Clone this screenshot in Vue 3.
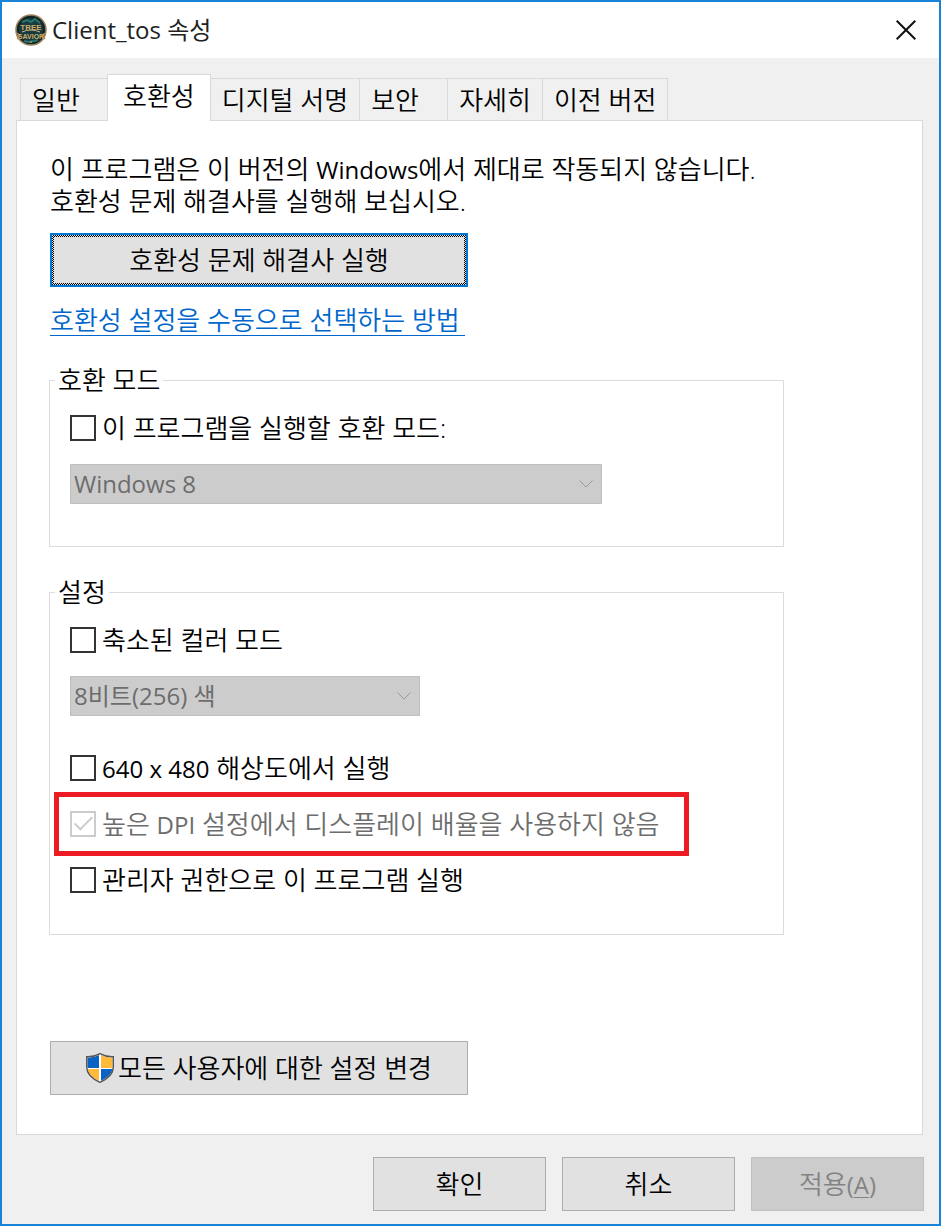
<template>
  <div class="dialog">
    <!-- Title bar -->
    <header class="title-bar">
      <svg class="app-icon" viewBox="0 0 32 32" aria-hidden="true">
        <circle cx="16" cy="16" r="15" fill="#173c3f" stroke="#9b8058" stroke-width="1.5" />
        <circle cx="16" cy="16" r="13" fill="none" stroke="#102527" stroke-width="2" />
        <path d="M7 8l5-2 4 2 4-3 5 4M9 27l5 1 5-1 4-1" fill="none" stroke="#2b746d" stroke-width="2" />
        <path d="M2 19l3 3-3 3M30 19l-3 3 3 3" fill="none" stroke="#b08b55" stroke-width="1.5" />
        <text x="16" y="16" class="logo-top">TREE</text>
        <text x="16" y="25" class="logo-bottom">SAVIOR</text>
        <path d="M7 18q9-4 18 0M15 28h2" fill="none" stroke="#d2b277" />
      </svg>
      <h1 class="title">Client_tos 속성</h1>
      <button type="button" class="close-button" aria-label="닫기">
        <svg viewBox="0 0 20 20" aria-hidden="true">
          <path d="M.7.7l18.600 18.600M19.300.7L.7 19.300" fill="none" stroke="#111" stroke-width="2" />
        </svg>
      </button>
    </header>

    <!-- Tabs -->
    <nav class="tabs" role="tablist">
      <button
        v-for="tab in tabs"
        :key="tab"
        type="button"
        role="tab"
        :aria-selected="tab === activeTab"
        :class="['tab', { 'is-active': tab === activeTab }]"
        @click="activeTab = tab"
      >
        {{ tab }}
      </button>
    </nav>

    <main class="panel" role="tabpanel">
      <div class="intro">
        <p>이 프로그램은 이 버전의 <span class="latin">Windows</span>에서 제대로 작동되지 않습니다.</p>
        <p>호환성 문제 해결사를 실행해 보십시오.</p>
      </div>
      <button type="button" class="btn btn-wide is-default">호환성 문제 해결사 실행</button>
      <a href="#" class="help-link" @click.prevent>호환성 설정을 수동으로 선택하는 방법</a>

      <fieldset class="group">
        <legend>호환 모드</legend>
        <label class="check-row">
          <input v-model="options.compat" type="checkbox" />
          <span>이 프로그램을 실행할 호환 모드:</span>
        </label>
        <div class="dropdown">
          <select aria-label="호환 모드" :disabled="!options.compat">
            <option>Windows 8</option>
          </select>
          <svg class="chevron" viewBox="0 0 14 8" aria-hidden="true">
            <path d="M.5.5L7 7l6.500-6.500" />
          </svg>
        </div>
      </fieldset>

      <fieldset class="group group-settings">
        <legend>설정</legend>
        <label class="check-row">
          <input v-model="options.color" type="checkbox" />
          <span>축소된 컬러 모드</span>
        </label>
        <div class="dropdown is-short">
          <select aria-label="컬러 모드" :disabled="!options.color">
            <option>8비트(256) 색</option>
          </select>
          <svg class="chevron" viewBox="0 0 14 8" aria-hidden="true">
            <path d="M.5.5L7 7l6.500-6.500" />
          </svg>
        </div>
        <div class="check-list">
          <label class="check-row">
            <input v-model="options.lowRes" type="checkbox" />
            <span><span class="latin">640 x 480</span> 해상도에서 실행</span>
          </label>
          <label class="check-row is-disabled is-marked">
            <input type="checkbox" checked disabled />
            <span>높은 <span class="latin">DPI</span> 설정에서 디스플레이 배율을 사용하지 않음</span>
          </label>
          <label class="check-row">
            <input v-model="options.admin" type="checkbox" />
            <span>관리자 권한으로 이 프로그램 실행</span>
          </label>
        </div>
      </fieldset>

      <button type="button" class="btn btn-wide all-users">
        <svg class="shield" viewBox="0 0 28 30" aria-hidden="true">
          <path d="M14 .7C10 3 5 4 .7 3.700V14c0 7 6 12 13.300 15.300C21.300 26 27.300 21 27.300 14V3.700C23 4 18 3 14 .7z" fill="#fff" />
          <path d="M13 2C9 4 5 4.700 1.500 4.700V15H13z" fill="#0863c5" />
          <path d="M15 2c4 2 8 2.700 11.500 2.700V15H15z" fill="#ffba39" />
          <path d="M1.500 16H13v12C7 25 2.500 21 1.500 16z" fill="#ffba39" />
          <path d="M26.500 16H15v12c6-3 10.500-7 11.500-12z" fill="#0863c5" />
          <path d="M14 .7C10 3 5 4 .7 3.700V14c0 7 6 12 13.300 15.300C21.300 26 27.300 21 27.300 14V3.700C23 4 18 3 14 .7z" fill="none" stroke="#555" stroke-width="1.400" />
        </svg>
        <span>모든 사용자에 대한 설정 변경</span>
      </button>
    </main>

    <!-- Action Buttons -->
    <footer class="actions">
      <button type="button" class="btn">확인</button>
      <button type="button" class="btn">취소</button>
      <button type="button" class="btn" disabled>적용<span class="latin">(<u>A</u>)</span></button>
    </footer>
  </div>
</template>

<script setup>
import { reactive, ref } from 'vue';

const tabs = ['일반', '호환성', '디지털 서명', '보안', '자세히', '이전 버전'];
const activeTab = ref('호환성');

const options = reactive({
  compat: false,
  color: false,
  lowRes: false,
  admin: false,
});
</script>

<style>
body {
  margin: 0;
}
</style>

<style scoped>
.dialog {
  box-sizing: border-box;
  display: flex;
  flex-direction: column;
  min-height: 100vh;
  border: 2px solid #1883d7;
  background: #f0f0f0;
  color: #000;
  font-family: "Open Sans", "Noto Sans CJK KR", sans-serif;
  font-size: 26px;
  font-weight: 350;
  line-height: 32px;
}

button,
select {
  font: inherit;
  color: inherit;
}

.latin {
  font-size: 24px;
  font-weight: 400;
  line-height: 24px;
}

/* Title bar */
.title-bar {
  display: flex;
  align-items: center;
  height: 56px;
  padding: 0 13px;
  background: #fff;
}

.app-icon {
  width: 32px;
  height: 32px;
  margin-right: 5px;
}

.logo-top,
.logo-bottom {
  fill: #cfab69;
  font-family: "Liberation Sans", sans-serif;
  font-weight: 700;
  text-anchor: middle;
}

.logo-top {
  font-size: 8px;
}

.logo-bottom {
  font-size: 7px;
}

.title {
  flex: 1;
  margin: 0;
  font-size: 24px;
  font-weight: 400;
  color: #222;
}

.close-button {
  display: flex;
  padding: 10px;
  border: none;
  background: transparent;
}

.close-button svg {
  width: 20px;
  height: 20px;
}

/* Tabs */
.tabs {
  display: flex;
  align-items: flex-end;
  margin: 16px 18px 0;
}

.tab {
  min-width: 88px;
  height: 42px;
  padding: 0 11px;
  border: 1px solid #d9d9d9;
  border-width: 1px 1px 0 0;
  background: #f0f0f0;
  text-align: left;
  white-space: nowrap;
}

.tab:first-child {
  border-left-width: 1px;
}

.tab.is-active {
  position: relative;
  height: 47px;
  margin: 0 0 -1px -1px;
  padding: 0 15px 4px;
  border-left-width: 1px;
  background: #fff;
}

/* Panel */
.panel {
  display: flex;
  flex: 1;
  flex-direction: column;
  align-items: flex-start;
  margin: 0 16px 0 14px;
  padding: 32px 33px 39px;
  border: 1px solid #d9d9d9;
  background: #fff;
}

.intro {
  margin-bottom: 16px;
}

.intro p {
  margin: 0;
}

.btn {
  box-sizing: border-box;
  height: 54px;
  padding: 0;
  border: 1px solid #adadad;
  background: #e1e1e1;
}

.btn:disabled {
  border-color: #bfbfbf;
  background: #ccc;
  color: #838383;
}

.btn-wide {
  width: 418px;
  max-width: 100%;
}

.btn.is-default {
  padding: 2px;
  border: 2px solid #0078d7;
  background:
    linear-gradient(#e1e1e1, #e1e1e1) content-box,
    repeating-conic-gradient(#000 0 25%, #e1e1e1 0 50%) 0 0 / 2px 2px padding-box;
}

.help-link {
  box-sizing: border-box;
  height: 32px;
  margin: 17px 0 28px;
  padding-right: 5px;
  border-bottom: 1px solid #0066cc;
  color: #0066cc;
  text-decoration: none;
}

/* Groups */
.group {
  box-sizing: border-box;
  width: 735px;
  max-width: 100%;
  min-width: 0;
  margin: 0 0 29px -1px;
  padding: 16px 20px 42px;
  border: 1px solid #dcdcdc;
}

.group-settings {
  padding-bottom: 38px;
}

.group legend {
  margin-left: -15px;
  padding: 0 3px;
}

.check-row {
  display: flex;
  align-items: center;
  gap: 6px;
  width: fit-content;
}

.check-row input {
  box-sizing: border-box;
  flex: none;
  appearance: none;
  position: relative;
  width: 26px;
  height: 26px;
  margin: 0;
  border: 2px solid #333;
  background: #fff;
}

.check-row input:disabled {
  border-color: #ccc;
}

.check-row input:checked::after {
  content: "";
  box-sizing: border-box;
  position: absolute;
  top: -1px;
  left: 7px;
  width: 9px;
  height: 18px;
  border: solid #333;
  border-width: 0 2px 2px 0;
  transform: rotate(45deg);
}

.check-row input:disabled::after {
  border-color: #ccc;
}

.check-row.is-disabled {
  color: #6d6d6d;
}

.check-row.is-marked {
  margin: -16px 0 -16px -16px;
  padding: 11px 24px 11px 11px;
  border: 5px solid #ed1c24;
}

.check-list {
  display: flex;
  flex-direction: column;
  gap: 24px;
  margin-top: 36px;
}

.dropdown {
  position: relative;
  width: 532px;
  max-width: 100%;
  margin-top: 20px;
}

.dropdown.is-short {
  width: 350px;
}

.dropdown select {
  box-sizing: border-box;
  display: block;
  appearance: none;
  width: 100%;
  height: 40px;
  padding: 0 32px 0 3px;
  border: 1px solid #adadad;
  border-radius: 0;
  background: #e1e1e1;
  font-size: 24px;
  font-weight: 400;
}

.dropdown select:disabled {
  border-color: #bfbfbf;
  background: #ccc;
  color: #6d6d6d;
  opacity: 1;
}

.chevron {
  position: absolute;
  top: 16px;
  right: 9px;
  width: 14px;
  height: 8px;
  fill: none;
  stroke: #999;
  pointer-events: none;
}

.all-users {
  display: flex;
  align-items: center;
  justify-content: center;
  gap: 4px;
  margin-top: 77px;
}

.shield {
  width: 28px;
  height: 30px;
}

/* Action Buttons */
.actions {
  display: flex;
  justify-content: flex-end;
  gap: 16px;
  padding: 22px 15px 13px;
}

.actions .btn {
  width: 173px;
}

.actions u {
  text-decoration-thickness: 1px;
  text-underline-offset: 3px;
}
</style>
